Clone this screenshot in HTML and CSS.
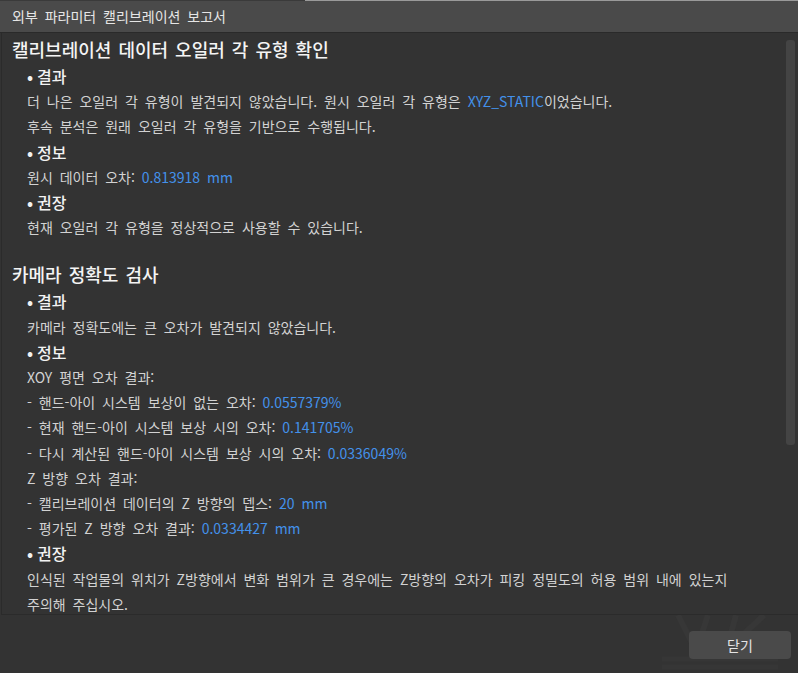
FILE: index.html
```html
<!DOCTYPE html>
<html lang="ko">
<head>
<meta charset="utf-8">
<title>외부 파라미터 캘리브레이션 보고서</title>
<link rel="stylesheet" href="styles.css">
</head>
<body>
<div class="window">
  <div class="titlebar">외부 파라미터 캘리브레이션 보고서</div>
  <div class="main">
    <div class="content">
      <section class="sec">
        <h1 class="h1">캘리브레이션 데이터 오일러 각 유형 확인</h1>
        <h2 class="h2"><span class="dot">•</span>결과</h2>
        <p class="line">더 나은 오일러 각 유형이 발견되지 않았습니다. 원시 오일러 각 유형은 <span class="val">XYZ_STATIC</span>이었습니다.</p>
        <p class="line">후속 분석은 원래 오일러 각 유형을 기반으로 수행됩니다.</p>
        <h2 class="h2"><span class="dot">•</span>정보</h2>
        <p class="line">원시 데이터 오차: <span class="val">0.813918 mm</span></p>
        <h2 class="h2"><span class="dot">•</span>권장</h2>
        <p class="line">현재 오일러 각 유형을 정상적으로 사용할 수 있습니다.</p>
      </section>
      <section class="sec sec2">
        <h1 class="h1">카메라 정확도 검사</h1>
        <h2 class="h2"><span class="dot">•</span>결과</h2>
        <p class="line">카메라 정확도에는 큰 오차가 발견되지 않았습니다.</p>
        <h2 class="h2"><span class="dot">•</span>정보</h2>
        <p class="line">XOY 평면 오차 결과:</p>
        <p class="line">- 핸드-아이 시스템 보상이 없는 오차: <span class="val">0.0557379%</span></p>
        <p class="line">- 현재 핸드-아이 시스템 보상 시의 오차: <span class="val">0.141705%</span></p>
        <p class="line">- 다시 계산된 핸드-아이 시스템 보상 시의 오차: <span class="val">0.0336049%</span></p>
        <p class="line">Z 방향 오차 결과:</p>
        <p class="line">- 캘리브레이션 데이터의 Z 방향의 뎁스: <span class="val">20 mm</span></p>
        <p class="line">- 평가된 Z 방향 오차 결과: <span class="val">0.0334427 mm</span></p>
        <h2 class="h2"><span class="dot">•</span>권장</h2>
        <p class="line">인식된 작업물의 위치가 Z방향에서 변화 범위가 큰 경우에는 Z방향의 오차가 피킹 정밀도의 허용 범위 내에 있는지</p>
        <p class="line">주의해 주십시오.</p>
      </section>
    </div>
    <div class="scrolltrack"><div class="thumb"></div></div>
  </div>
  <div class="footer">
    <svg class="wm-logo" width="120" height="58" viewBox="0 0 120 58" aria-hidden="true">
      <path d="M18 0 L36 36 M48 0 L36 36 M76 0 L66 36 M104 0 L66 36" stroke="#373737" stroke-width="6" fill="none"/>
      <path d="M2 44 H118 M2 52 H118" stroke="#363636" stroke-width="5" fill="none"/>
    </svg>
    <button class="btn" type="button">닫기</button>
  </div>
</div>
</body>
</html>
```
FILE: styles.css
```css
* { box-sizing: border-box; }
html, body {
  margin: 0;
  padding: 0;
  background: #333333;
}
body {
  font-family: "Noto Sans CJK KR", "Noto Sans", sans-serif;
  color: #d2d2d2;
}
.window {
  width: 798px;
  height: 673px;
  display: flex;
  flex-direction: column;
  overflow: hidden;
}
.titlebar {
  height: 33px;
  flex: none;
  background:
    linear-gradient(to right, #3a3a3a 305px, #9a9a9a 305px) top left / 100% 1px no-repeat,
    #4a4a4a;
  border-bottom: 1px solid #2a2a2a;
  padding: 0 0 0 12px;
  font-size: 14px;
  line-height: 32px;
  color: #e6e6e6;
  word-spacing: 3px;
}
.main {
  flex: none;
  height: 582px;
  display: flex;
  margin-left: 1px;
  border-left: 1px solid #2b2b2b;
  border-bottom: 1px solid #2b2b2b;
  overflow: hidden;
}
.content {
  flex: 1;
  padding: 1px 0 0 10px;
  overflow: hidden;
}
.sec2 { margin-top: 19px; }
.h1 {
  margin: 0;
  font-size: 18px;
  font-weight: 500;
  line-height: 30px;
  color: #f4f4f4;
  word-spacing: 2px;
}
.h2 {
  margin: 0;
  padding-left: 15px;
  font-size: 16px;
  font-weight: 500;
  line-height: 25.2px;
  color: #f2f2f2;
}
.dot {
  display: inline-block;
  width: 10px;
  font-weight: 700;
}
.line {
  margin: 0;
  padding-left: 15px;
  font-size: 14px;
  line-height: 25.2px;
  white-space: nowrap;
  word-spacing: 3px;
}
.val { color: #4391ea; }
.scrolltrack {
  flex: none;
  width: 13px;
  padding: 7px 3px 0 1px;
}
.thumb {
  width: 9px;
  height: 405px;
  background: #444444;
  border-radius: 3px;
}
.footer {
  flex: 1;
  position: relative;
  display: flex;
  justify-content: flex-end;
  align-items: flex-start;
  padding: 16px 7px 0 0;
  background: #333333;
}
.wm-logo {
  position: absolute;
  left: 660px;
  top: 0;
}
.btn {
  position: relative;
  width: 102px;
  height: 28px;
  border: none;
  border-radius: 4px;
  background: #4a4a4a;
  color: #e4e4e4;
  font-family: "Noto Sans CJK KR", "Noto Sans", sans-serif;
  font-size: 14px;
  padding: 0;
}
```
